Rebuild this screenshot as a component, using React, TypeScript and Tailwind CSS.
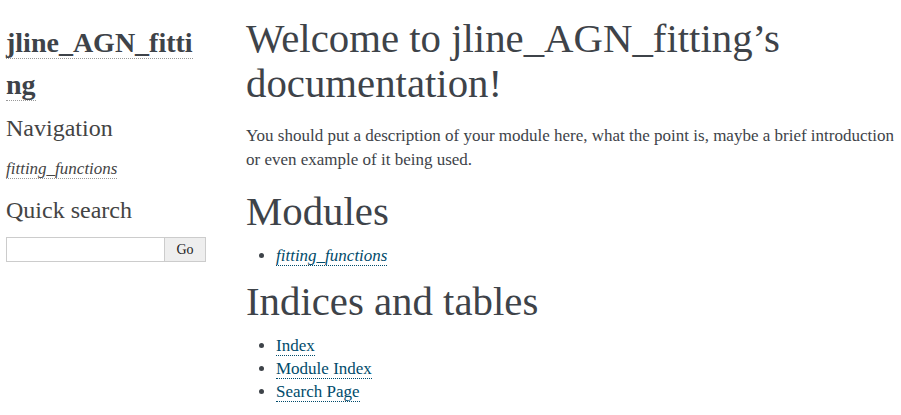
// Sphinx docs index page - sidebar + body
export default function App() {
  return (
    <div className="flex min-h-[415px] bg-white text-[#3E4349] font-['Liberation_Serif',Georgia,serif]">
      {/* Sidebar */}
      <div className="w-[246px] shrink-0 pl-[6px] pr-[40px] text-[14px] leading-[1.5]">
        <h1 className="mt-[22px] mb-[4px] text-[28px] font-bold leading-[42px] break-words text-[#3E4349]">
          <a href="#" className="border-b border-dotted border-[#999]">
            jline_AGN_fitting
          </a>
        </h1>
        <h3 className="mb-[10px] text-[24px] leading-[36px] text-[#444]">Navigation</h3>
        <p className="text-[17px] leading-[25.5px]">
          <a href="#" className="italic text-[#444] border-b border-dotted border-[#999]">
            fitting_functions
          </a>
        </p>
        <h3 className="mt-[10px] mb-[9px] text-[24px] leading-[36px] text-[#444]">Quick search</h3>
        <form className="flex h-[25px]" onSubmit={(e) => e.preventDefault()}>
          <input
            type="text"
            className="w-[159px] h-full border border-[#ccc] bg-white px-1 text-[14px] outline-none"
          />
          <button
            type="submit"
            className="w-[41px] h-full border border-l-0 border-[#ccc] bg-[#eee] text-[14px] text-[#222]"
          >
            Go
          </button>
        </form>
      </div>

      {/* Body */}
      <div className="flex-1 min-w-0 pr-[4px] text-[17px]">
        <h1 className="mt-[16px] text-[40.8px] leading-[45px]">
          Welcome to jline_AGN_fitting’s documentation!
        </h1>
        <p className="mt-[18px] leading-[1.4em]">
          You should put a description of your module here, what the point is, maybe a brief introduction or
          even example of it being used.
        </p>

        <h2 className="mt-[17px] text-[40.8px] leading-[45px]">Modules</h2>
        <ul className="mt-[10px] pl-[30px] list-disc leading-[1.4em]">
          <li>
            <a href="#" className="italic text-[#004B6B] border-b border-dotted border-[#004B6B]">
              fitting_functions
            </a>
          </li>
        </ul>

        <h2 className="mt-[12px] text-[40.8px] leading-[45px]">Indices and tables</h2>
        <ul className="mt-[10px] pl-[30px] list-disc leading-[23px]">
          <li>
            <a href="#" className="text-[#004B6B] border-b border-dotted border-[#004B6B]">Index</a>
          </li>
          <li>
            <a href="#" className="text-[#004B6B] border-b border-dotted border-[#004B6B]">Module Index</a>
          </li>
          <li>
            <a href="#" className="text-[#004B6B] border-b border-dotted border-[#004B6B]">Search Page</a>
          </li>
        </ul>
      </div>
    </div>
  );
}
